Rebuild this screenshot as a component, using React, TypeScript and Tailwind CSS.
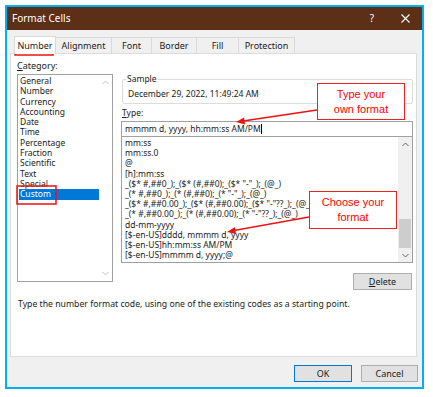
import React from "react";

const categories = [
    "General",
    "Number",
    "Currency",
    "Accounting",
    "Date",
    "Time",
    "Percentage",
    "Fraction",
    "Scientific",
    "Text",
    "Special",
    "Custom",
];

const formats = [
    "mm:ss",
    "mm:ss.0",
    "@",
    "[h]:mm:ss",
    '_($* #,##0_);_($* (#,##0);_($* "-"_);_(@_)',
    '_(* #,##0_);_(* (#,##0);_(* "-"_);_(@_)',
    '_($* #,##0.00_);_($* (#,##0.00);_($* "-"??_);_(@_)',
    '_(* #,##0.00_);_(* (#,##0.00);_(* "-"??_);_(@_)',
    "dd-mm-yyyy",
    "[$-en-US]dddd, mmmm d, yyyy",
    "[$-en-US]hh:mm:ss AM/PM",
    "[$-en-US]mmmm d, yyyy;@",
];

const tabs = [
    { label: "Number", w: "w-[42px]" },
    { label: "Alignment", w: "w-[56px]" },
    { label: "Font", w: "w-[40px]" },
    { label: "Border", w: "w-[45px]" },
    { label: "Fill", w: "w-[42px]" },
    { label: "Protection", w: "w-[56px]" },
];

const Chevron: React.FC<{ up?: boolean; color: string }> = ({ up, color }) => (
    <svg width="7" height="5" viewBox="0 0 7 5">
        <path
            d={up ? "M0.5 4 L3.5 1 L6.5 4" : "M0.5 1 L3.5 4 L6.5 1"}
            fill="none"
            stroke={color}
            strokeWidth="1"
        />
    </svg>
);

const App: React.FC = () => {
    return (
        <div className="relative w-[433px] h-[397px] bg-white pt-[5px] pl-[5px] font-['Noto_Sans',sans-serif] text-[9px] text-[#1a1a1a]">
            <div className="w-[419px] h-[384px] border-2 border-[#00b0f0] bg-[#f0f0f0] flex flex-col">
                {/* title bar */}
                <div className="h-[23px] bg-[#5c2f17] flex items-center text-white pl-[5px] pr-[12px]">
                    <span className="text-[10px]">Format Cells</span>
                    <span className="ml-auto mr-[27px] text-[10px]">?</span>
                    <svg width="9" height="9" viewBox="0 0 9 9">
                        <path d="M0.5 0.5 L8.5 8.5 M8.5 0.5 L0.5 8.5" stroke="white" strokeWidth="1.1" />
                    </svg>
                </div>

                {/* tabs */}
                <div className="flex items-end mt-[5px] pl-[7px] h-[18px]">
                    {tabs.map((t, i) =>
                        i === 0 ? (
                            <div
                                key={t.label}
                                className={`${t.w} h-[18px] bg-white border border-b-0 border-[#d9d9d9] flex items-center justify-center -mb-px relative z-10`}
                            >
                                {t.label}
                            </div>
                        ) : (
                            <div
                                key={t.label}
                                className={`${t.w} h-[16px] bg-[#f0f0f0] border border-b-0 border-l-0 border-[#d9d9d9] flex items-center justify-center`}
                            >
                                {t.label}
                            </div>
                        )
                    )}
                </div>

                {/* panel */}
                <div className="ml-[3px] w-[407px] h-[304px] bg-white border border-[#dcdcdc] pl-[6px] flex flex-col text-[8.5px]">
                    <div className="flex">
                        {/* category */}
                        <div className="w-[96px] flex flex-col">
                            <div className="mt-[6px] leading-[12px] text-[9px]">
                                <span className="underline">C</span>ategory:
                            </div>
                            <div className="mt-[2px] h-[208px] border border-[#a0a0a0] p-px flex">
                                <div className="w-[80px] flex flex-col">
                                    {categories.map((c) =>
                                        c === "Custom" ? (
                                            <div key={c} className="leading-[10.3px] pl-px bg-[#0078d7] text-white">
                                                {c}
                                            </div>
                                        ) : (
                                            <div key={c} className="leading-[10.3px] pl-px">
                                                {c}
                                            </div>
                                        )
                                    )}
                                </div>
                                <div className="flex-1 flex flex-col items-center justify-between py-[4px]">
                                    <Chevron up color="#c4c4c4" />
                                    <Chevron color="#c4c4c4" />
                                </div>
                            </div>
                        </div>

                        {/* right column */}
                        <div className="ml-[8px] w-[292px] flex flex-col">
                            <div className="mt-[25px] ml-px w-[291px] h-[25px] border border-[#dcdcdc] rounded-[2px] relative">
                                <span className="absolute -top-[7px] left-[3px] bg-white px-px leading-[12px]">
                                    Sample
                                </span>
                                <div className="pl-[5px] pt-[8px] leading-[12px]">
                                    December 29, 2022, 11:49:24 AM
                                </div>
                            </div>
                            <div className="mt-[3px] leading-[12px] ml-px">
                                <span className="underline">T</span>ype:
                            </div>
                            <div className="mt-[2px] h-[16px] border border-[#a0a0a0] flex items-center pl-[3px]">
                                mmmm d, yyyy, hh:mm:ss AM/PM
                                <span className="w-px h-[10px] bg-black" />
                            </div>
                            <div className="h-[126px] border border-[#a0a0a0] border-t-0 flex">
                                <div className="flex-1 flex flex-col pt-px pl-[3px] overflow-hidden whitespace-nowrap">
                                    {formats.map((f) => (
                                        <div key={f} className="leading-[10.2px]">
                                            {f}
                                        </div>
                                    ))}
                                </div>
                                <div className="w-[14px] bg-[#f0f0f0] flex flex-col">
                                    <div className="h-[14px] flex items-center justify-center">
                                        <Chevron up color="#606060" />
                                    </div>
                                    <div className="flex-1" />
                                    <div className="h-[29px] mx-px bg-[#cdcdcd]" />
                                    <div className="h-[14px] flex items-center justify-center">
                                        <Chevron color="#606060" />
                                    </div>
                                </div>
                            </div>
                            <div className="mt-[10px] self-end mr-px w-[59px] h-[17px] bg-[#e1e1e1] border border-[#adadad] flex items-center justify-center text-[9px]">
                                <span>
                                    <span className="underline">D</span>elete
                                </span>
                            </div>
                        </div>
                    </div>
                    <div className="mt-[8px] leading-[12px] pl-px text-[8.7px]">
                        Type the number format code, using one of the existing codes as a starting point.
                    </div>
                </div>

                {/* buttons */}
                <div className="mt-[8px] flex justify-end gap-[9px] pr-[4px]">
                    <div className="w-[58px] h-[17px] bg-[#e1e1e1] border border-[#0078d7] flex items-center justify-center">
                        OK
                    </div>
                    <div className="w-[57px] h-[17px] bg-[#e1e1e1] border border-[#adadad] flex items-center justify-center">
                        Cancel
                    </div>
                </div>
            </div>

            {/* annotations */}
            <div className="absolute left-[317px] top-[83px] w-[88px] h-[37px] bg-white border border-[#ee2222] flex flex-col items-center justify-center text-[#ff0000] text-[11px] leading-[15px] font-['Liberation_Sans',sans-serif]">
                <span>Type your</span>
                <span>own format</span>
            </div>
            <div className="absolute left-[309px] top-[191px] w-[88px] h-[38px] bg-white border border-[#ee2222] flex flex-col items-center justify-center text-[#ff0000] text-[11px] leading-[15px] font-['Liberation_Sans',sans-serif]">
                <span>Choose your</span>
                <span>format</span>
            </div>
            <svg className="absolute left-0 top-0 pointer-events-none" width="433" height="397">
                <rect x="15" y="39" width="38" height="16" fill="none" stroke="#ee1111" strokeWidth="1.5" />
                <rect x="17" y="186" width="39" height="18" fill="none" stroke="#ee1111" strokeWidth="1.5" />
                <line x1="317" y1="110" x2="243" y2="121" stroke="#ee1111" strokeWidth="1.5" />
                <polygon points="236,122 244,117.5 245,124.5" fill="#ee1111" />
                <line x1="309" y1="217" x2="234" y2="230.5" stroke="#ee1111" strokeWidth="1.5" />
                <polygon points="227,232 235,227 236,234" fill="#ee1111" />
            </svg>
        </div>
    );
};

export default App;
